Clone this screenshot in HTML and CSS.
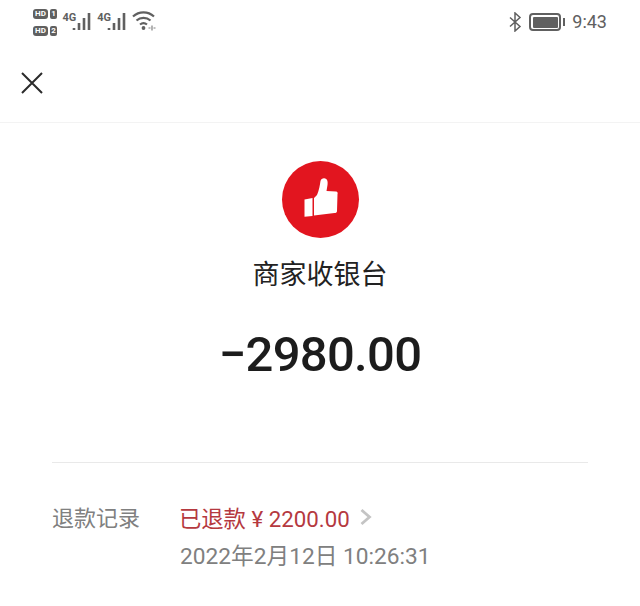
FILE: index.html
```html
<!DOCTYPE html>
<html lang="zh-CN">
<head>
    <meta charset="UTF-8">
    <meta name="viewport" content="width=device-width, initial-scale=1.0">
    <title>账单详情</title>
    <link rel="stylesheet" href="styles.css">
</head>
<body>

    <!-- Status bar -->
    <div class="status-bar">
        <div class="status-left">
            <div class="sim-labels">
                <div class="sim-row"><span class="hd-tag">HD</span><span class="sim-num">1</span></div>
                <div class="sim-row"><span class="hd-tag">HD</span><span class="sim-num">2</span></div>
            </div>
            <div class="signal"><span class="net">4G</span>
                <svg width="20" height="22" viewBox="0 0 20 22"><path d="M2 20v-2M7 20v-7M12 20V8M17 20V3" stroke="#606060" stroke-width="2.600" fill="none"/></svg>
            </div>
            <div class="signal"><span class="net">4G</span>
                <svg width="20" height="22" viewBox="0 0 20 22"><path d="M2 20v-2M7 20v-7M12 20V8M17 20V3" stroke="#606060" stroke-width="2.600" fill="none"/></svg>
            </div>
            <svg class="wifi" width="24" height="22" viewBox="0 0 24 22">
                <path d="M1 6.500C7 1 16 1 22 6.500M4.500 10.500C8.500 7 14.500 7 18.500 10.500M8 14.500c2-1.600 5-1.600 7 0" stroke="#606060" stroke-width="2.200" fill="none"/>
                <circle cx="11.500" cy="18" r="1.900" fill="#606060"/>
                <path d="M16.500 18h2M20 15.500v5M21.500 18h2" stroke="#808080" stroke-width="1.200" fill="none"/>
            </svg>
        </div>
        <div class="status-right">
            <svg width="14" height="20" viewBox="0 0 14 20"><path d="M2 5.500l10 9-5 4.500V1l5 4.500-10 9" stroke="#606060" stroke-width="1.500" fill="none"/></svg>
            <div class="battery"><div class="battery-body"><div class="battery-fill"></div></div><div class="battery-cap"></div></div>
            <span class="clock">9:43</span>
        </div>
    </div>

    <!-- Title bar -->
    <div class="title-bar">
        <svg width="24" height="24" viewBox="0 0 24 24"><path d="M2 2l20 20M22 2L2 22" stroke="#2b2b2b" stroke-width="2" fill="none"/></svg>
    </div>

    <!-- Merchant and amount -->
    <div class="summary">
        <div class="logo">
            <svg width="38" height="44" viewBox="0 0 38 44">
                <path d="M3.500 21.500l8-1.500v18l-8 .8z" fill="#fff"/>
                <path d="M13 20l3-3c2-4 3-11 3.500-14 .500-2 2.500-3 4.500-2.500 2.500.500 3 3.500 2.500 6.500l-1 6 9.500.500c1.500 0 2 1.500 1.500 2.500l-.500 17c0 1.500-1 2-2.500 2L13 37.500z" fill="#fff"/>
            </svg>
        </div>
        <div class="merchant">商家收银台</div>
        <div class="amount">−2980.00</div>
    </div>

    <!-- Refund record -->
    <div class="details">
        <div class="detail-row">
            <div class="detail-label">退款记录</div>
            <div class="detail-value">
                <div class="refund-line">
                    <span class="refund-text">已退款 ¥ 2200.00</span>
                    <svg width="14" height="18" viewBox="0 0 14 18"><path d="M2.500 2l8 7-8 7" stroke="#c4c4c4" stroke-width="2.800" fill="none"/></svg>
                </div>
                <div class="refund-time">2022年2月12日 10:26:31</div>
            </div>
        </div>
    </div>

</body>
</html>
```

FILE: styles.css
```css
/* Body styling */
body {
    margin: 0;
    width: 640px;
    height: 606px;
    overflow: hidden;
    background-color: #fff;
    font-family: 'Roboto', 'Noto Sans CJK SC', sans-serif;
    color: #222;
}

/* Status bar */
.status-bar {
    height: 44px;
    display: flex;
    justify-content: space-between;
    padding: 0 33px;
    box-sizing: border-box;
}

.status-left {
    display: flex;
    align-items: flex-start;
    gap: 5px;
    padding-top: 9px;
}

.sim-labels {
    display: flex;
    flex-direction: column;
    gap: 7px;
}

.sim-row {
    display: flex;
    gap: 2px;
    height: 10px;
    font-size: 8px;
    font-weight: 700;
    line-height: 10px;
}

.hd-tag {
    background-color: #606060;
    color: #fff;
    border-radius: 3px;
    padding: 0 2px;
}

.sim-num {
    background-color: #606060;
    color: #fff;
    border-radius: 2px;
    padding: 0 1.500px;
}

.signal {
    display: flex;
    align-items: flex-start;
    height: 26px;
}

.signal svg {
    margin-top: 1px;
    margin-left: -4px;
}

.net {
    font-size: 11px;
    font-weight: 700;
    color: #606060;
    line-height: 17px;
}

.wifi {
    margin-top: 1px;
}

.status-right {
    display: flex;
    align-items: flex-start;
    gap: 7px;
    padding-top: 12px;
}

.battery {
    display: flex;
    align-items: center;
    gap: 2px;
    height: 20px;
}

.battery-body {
    width: 25px;
    height: 11px;
    border: 2px solid #606060;
    border-radius: 4px;
    padding: 1.500px;
    box-sizing: content-box;
}

.battery-fill {
    height: 100%;
    background-color: #606060;
    border-radius: 1px;
}

.battery-cap {
    width: 2px;
    height: 8px;
    background-color: #606060;
}

.clock {
    font-size: 18px;
    color: #606060;
    line-height: 20px;
}

/* Title bar */
.title-bar {
    height: 79px;
    padding: 27px 0 0 20px;
    box-sizing: border-box;
    border-bottom: 1px solid #f3f3f3;
}

/* Merchant and amount */
.summary {
    display: flex;
    flex-direction: column;
    align-items: center;
    margin: 0 52px;
    height: 340px;
    box-sizing: border-box;
    padding-top: 38px;
    border-bottom: 1px solid #e9e9e9;
}

.logo {
    width: 77px;
    height: 77px;
    border-radius: 50%;
    background-color: #e2151f;
    display: flex;
    justify-content: center;
    align-items: center;
}

.merchant {
    margin-top: 19px;
    font-size: 27px;
    line-height: 36px;
}

.amount {
    margin-top: 34px;
    font-size: 49px;
    font-weight: 500;
    line-height: 56px;
    letter-spacing: -0.700px;
    color: #1c1c1c;
}

/* Refund record */
.details {
    padding: 40px 52px 0;
}

.detail-row {
    display: flex;
}

.detail-label {
    width: 128px;
    font-size: 22px;
    line-height: 32px;
    color: #808080;
}

.refund-line {
    display: flex;
    align-items: center;
    gap: 9px;
    height: 28px;
}

.refund-text {
    margin-left: -1px;
    font-size: 22.300px;
    color: #b5393f;
}

.refund-time {
    margin-top: 10px;
    font-size: 22.700px;
    line-height: 32px;
    color: #808080;
}
```
